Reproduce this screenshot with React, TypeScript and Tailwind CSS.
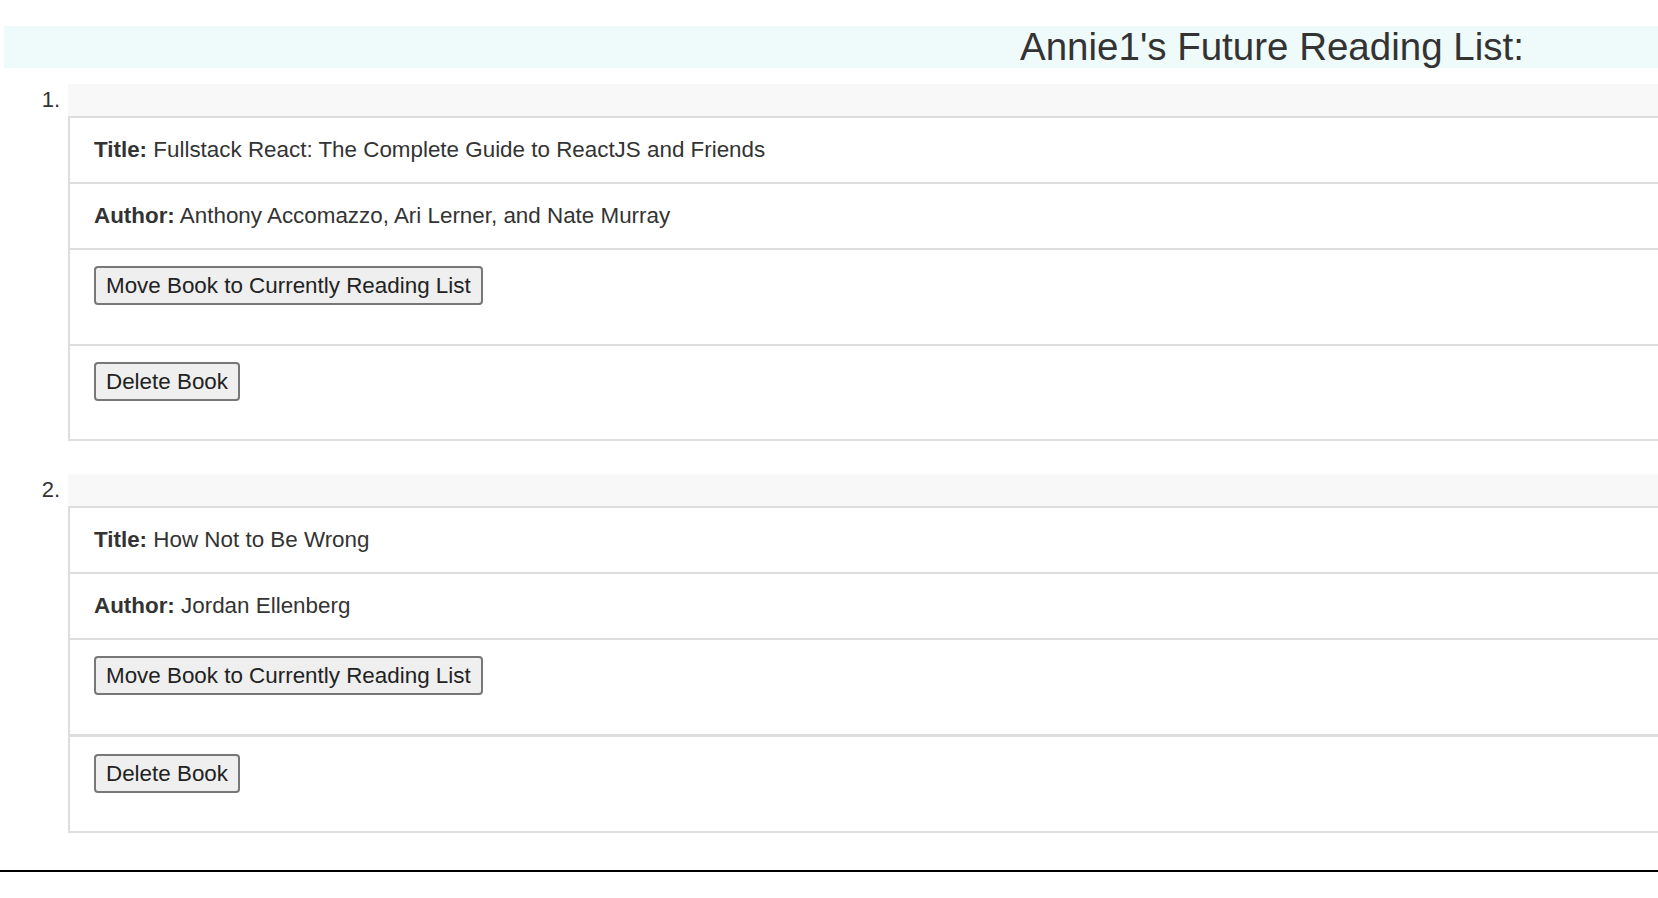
import React from "react";

const books = [
  {
    title: "Fullstack React: The Complete Guide to ReactJS and Friends",
    author: "Anthony Accomazzo, Ari Lerner, and Nate Murray",
  },
  {
    title: "How Not to Be Wrong",
    author: "Jordan Ellenberg",
  },
];

function Btn({ children }: { children: React.ReactNode }) {
  return (
    <button className="h-[39px] px-[10px] flex items-center border-2 border-[#777777] rounded-[4px] bg-[#efefef] text-[22.4px] leading-[25px] text-[#222222] whitespace-nowrap">
      {children}
    </button>
  );
}

export default function App() {
  return (
    <div
      className="min-h-screen w-full overflow-hidden bg-white text-[#333333]"
      style={{ fontFamily: '"Liberation Sans", Arial, Helvetica, sans-serif' }}
    >
      <div className="pt-[26px]">
        <div className="ml-[4px] h-[42px] bg-[#effafa] pl-[1016px] text-[38.5px] leading-[42px] whitespace-nowrap">
          Annie1's Future Reading List:
        </div>
      </div>

      <div className="mt-[16px] flex flex-col gap-[33px]">
        {books.map((b, i) => (
          <div key={i} className="flex">
            <div className="w-[68px] shrink-0 pr-[8px] text-right text-[22px] leading-[32px]">
              {i + 1}.
            </div>
            <div className="w-[1640px] shrink-0">
              <div className="h-[32px] bg-[#f8f8f8]" />
              <div className="border-l-2 border-b-2 border-[#dddddd] text-[22.4px] leading-[24px]">
                <div className="border-t-2 border-[#dddddd] pl-[24px] py-[20px] whitespace-nowrap">
                  <b>Title:</b> {b.title}
                </div>
                <div className="border-t-2 border-[#dddddd] pl-[24px] py-[20px] whitespace-nowrap">
                  <b>Author:</b> {b.author}
                </div>
                <div className="border-t-2 border-[#dddddd] pl-[24px] pt-[16px] pb-[39px]">
                  <Btn>Move Book to Currently Reading List</Btn>
                </div>
                <div
                  className={
                    i === 1
                      ? "border-t-[3px] border-[#dddddd] pl-[24px] pt-[17px] pb-[38px]"
                      : "border-t-2 border-[#dddddd] pl-[24px] pt-[16px] pb-[38px]"
                  }
                >
                  <Btn>Delete Book</Btn>
                </div>
              </div>
            </div>
          </div>
        ))}
      </div>

      <div className="mt-[37px] h-[2px] bg-black" />
    </div>
  );
}
